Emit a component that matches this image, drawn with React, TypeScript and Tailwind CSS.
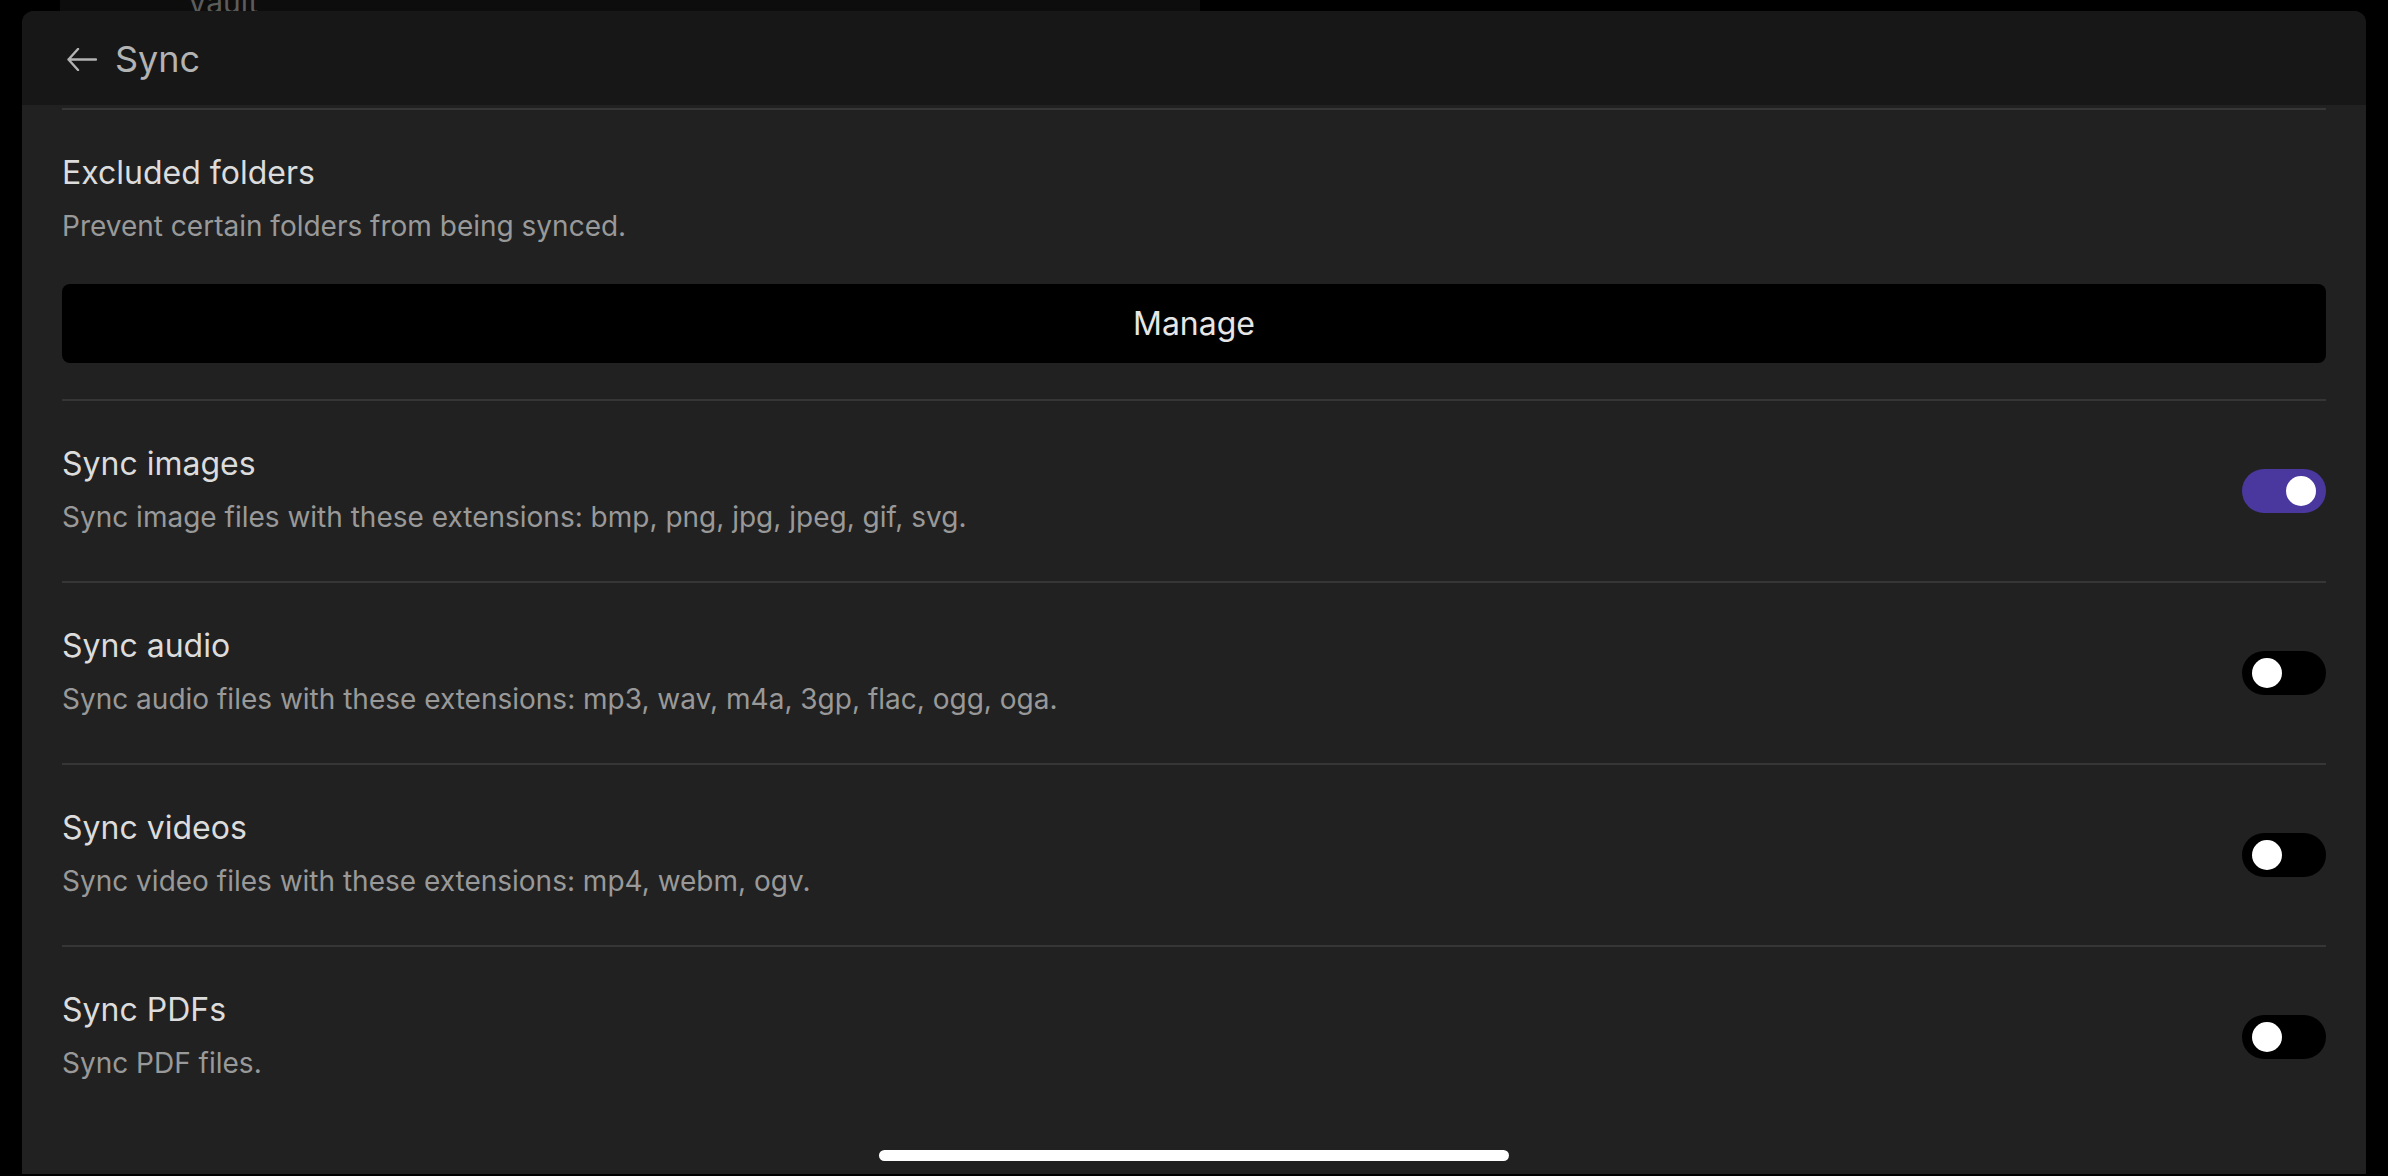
import { ReactNode } from "react";

type SyncOption = {
  title: string;
  desc: string;
  on: boolean;
};

const OPTIONS: SyncOption[] = [
  {
    title: "Sync images",
    desc: "Sync image files with these extensions: bmp, png, jpg, jpeg, gif, svg.",
    on: true,
  },
  {
    title: "Sync audio",
    desc: "Sync audio files with these extensions: mp3, wav, m4a, 3gp, flac, ogg, oga.",
    on: false,
  },
  {
    title: "Sync videos",
    desc: "Sync video files with these extensions: mp4, webm, ogv.",
    on: false,
  },
  {
    title: "Sync PDFs",
    desc: "Sync PDF files.",
    on: false,
  },
];

function BackArrow() {
  return (
    <svg width="30" height="23" viewBox="0 0 30 23" fill="none">
      <path
        d="M11 1 L1.5 11.5 L11 22 M1.5 11.5 H29"
        stroke="#b3b3b3"
        strokeWidth="2.4"
        strokeLinecap="round"
        strokeLinejoin="round"
      />
    </svg>
  );
}

function Toggle({ on }: { on: boolean }) {
  return (
    <div
      className={`flex h-[44px] w-[84px] shrink-0 items-center rounded-full px-[10px] ${
        on ? "justify-end bg-[#4a389f]" : "justify-start bg-black"
      }`}
    >
      <div className="h-[30px] w-[30px] rounded-full bg-white" />
    </div>
  );
}

function SettingText({ title, desc }: { title: string; desc: string }) {
  return (
    <div>
      <div className="text-[32px] leading-[40px] text-[#dcdcdc]">{title}</div>
      <div className="mt-[15px] text-[28px] leading-[36px] text-[#999999]">{desc}</div>
    </div>
  );
}

function Row({ children }: { children: ReactNode }) {
  return (
    <div className="flex h-[182px] items-center justify-between border-t-2 border-[#363636]">
      {children}
    </div>
  );
}

export default function App() {
  return (
    <div
      className="h-[1176px] w-[2388px] overflow-hidden bg-black"
      style={{ fontFamily: "Inter, 'Noto Sans', sans-serif" }}
    >
      {/* dimmed page behind the sheet */}
      <div className="flex h-[11px] overflow-hidden">
        <div className="ml-[60px] h-full w-[1140px] bg-[#0d0d0d] pl-[127px]">
          <div className="-mt-[13px] text-[30px] leading-[30px] text-[#5c5c5c]">Vault</div>
        </div>
      </div>

      <div className="relative mx-[22px] h-[1163px] overflow-hidden rounded-t-[12px] bg-[#212121]">
        <div className="flex h-[94px] items-center gap-[18px] bg-[#171717] pl-[45px] pt-[2px]">
          <BackArrow />
          <span className="text-[36px] leading-none text-[#b3b3b3]">Sync</span>
        </div>

        <div className="px-[40px]">
          <div className="mt-[3px] h-[2px] bg-[#363636]" />

          <div className="pb-[36px] pt-[43px]">
            <SettingText
              title="Excluded folders"
              desc="Prevent certain folders from being synced."
            />
            <button className="mt-[40px] flex h-[79px] w-full items-center justify-center rounded-[8px] bg-black text-[32px] text-[#e6e6e6]">
              Manage
            </button>
          </div>

          {OPTIONS.map((o) => (
            <Row key={o.title}>
              <div className="pb-[4px]">
                <SettingText title={o.title} desc={o.desc} />
              </div>
              <Toggle on={o.on} />
            </Row>
          ))}
        </div>

        {/* home indicator */}
        <div className="absolute bottom-[13px] left-[857px] h-[11px] w-[630px] rounded-full bg-white" />
      </div>
    </div>
  );
}
